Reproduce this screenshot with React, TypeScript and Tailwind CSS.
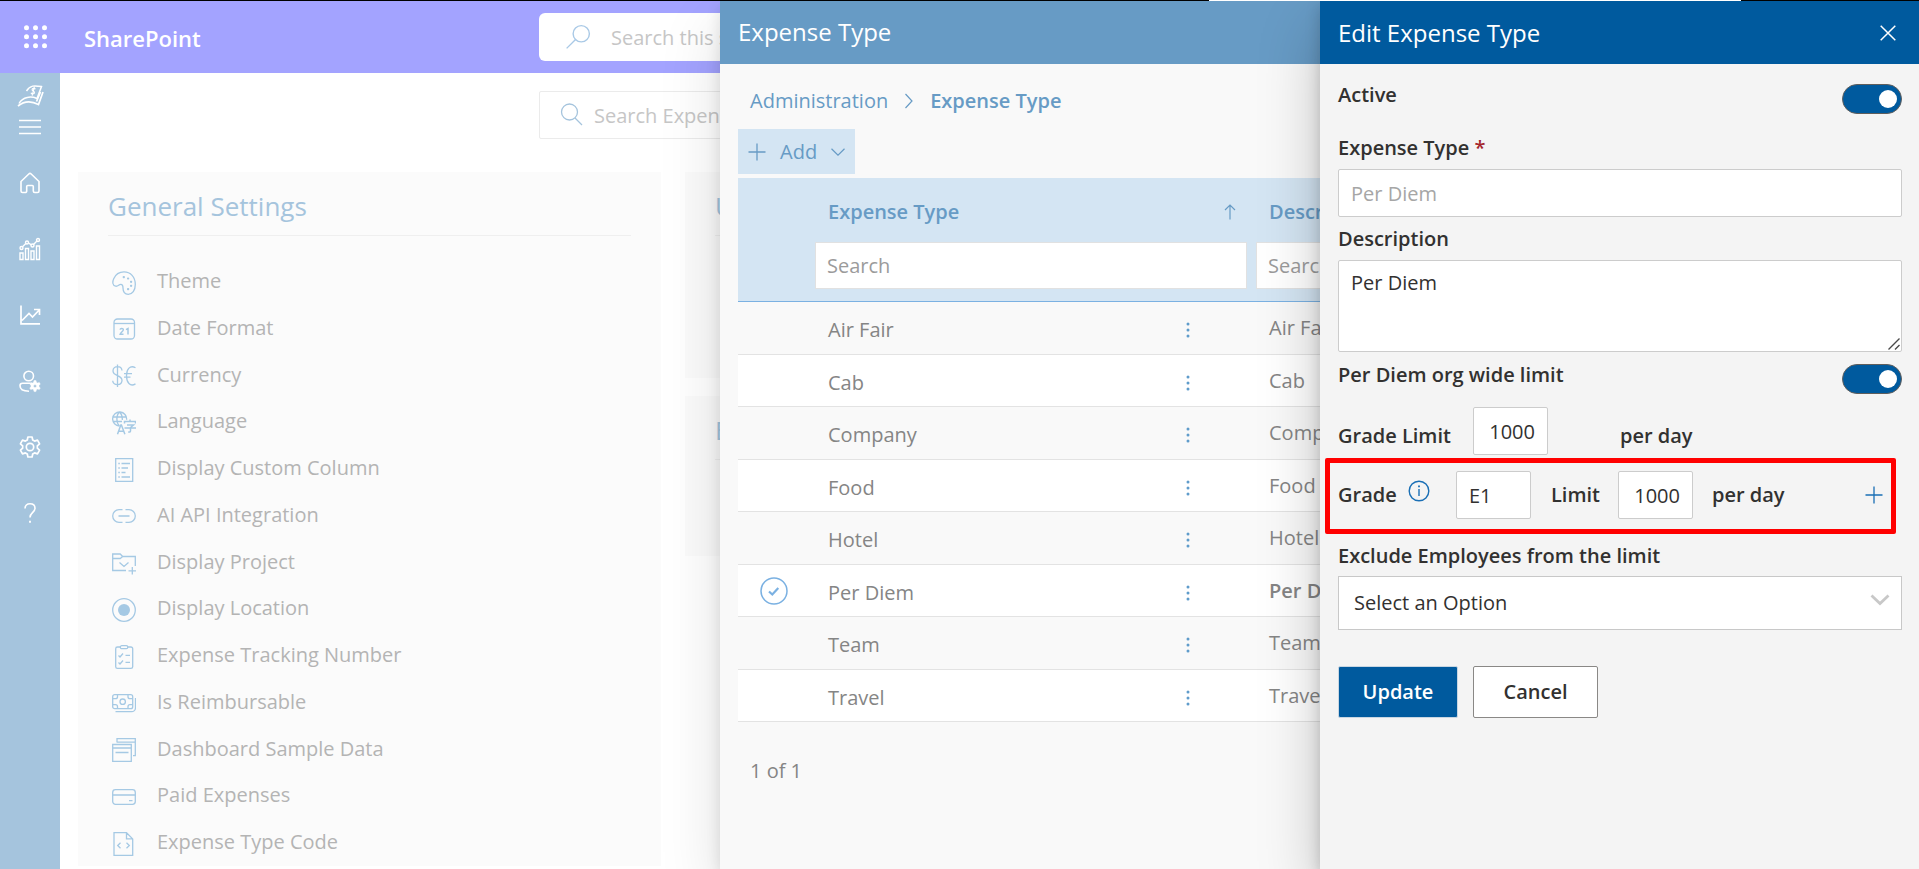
import React from "react";

type IconProps = { children: React.ReactNode; className?: string; width?: number };

function Icon({ children, className = "size-6", width = 1.3 }: IconProps) {
  return (
    <svg
      viewBox="0 0 24 24"
      className={className}
      fill="none"
      stroke="currentColor"
      strokeWidth={width}
      aria-hidden="true"
    >
      {children}
    </svg>
  );
}

const gearPath =
  "M9.9 2h4.2l.6 3 1.9 1.1 2.9-1 2.1 3.7-2.3 2a6 6 0 0 1 0 2.4l2.3 2-2.1 3.7-2.9-1-1.9 1.1-.6 3H9.9l-.6-3-1.9-1.1-2.9 1-2.1-3.7 2.3-2a6 6 0 0 1 0-2.4l-2.3-2 2.1-3.7 2.9 1 1.9-1.1z";

const settings: { label: string; icon: React.ReactNode }[] = [
  {
    label: "Theme",
    icon: (
      <Icon>
        <path d="M12 .8C18.500.8 23.300 6 23.300 13.500c0 5.800-3 9.800-7 9.800-3.600 0-5.300-2.500-5.300-6.300 0-2.200-.6-3.700-2.300-3.700-1.800 0-2.700 2.300-5 1.900C.4 14.700.3 11 1.700 7.700 3.500 3.400 7.500.8 12 .8z" />
        <g fill="currentColor" stroke="none">
          <rect x="10.700" y="5" width="2.200" height="2.200" rx=".8" />
          <rect x="15" y="6.400" width="2.200" height="2.200" rx=".8" />
          <rect x="18" y="9.700" width="2.200" height="2.200" rx=".8" />
          <rect x="18" y="13.700" width="2.200" height="2.200" rx=".8" />
          <rect x="15" y="17" width="2.200" height="2.200" rx=".8" />
        </g>
      </Icon>
    ),
  },
  {
    label: "Date Format",
    icon: (
      <Icon>
        <rect x="2" y="2" width="20.500" height="20" rx="3.500" />
        <path d="M2 6.500h20.500" />
        <path d="M8 12.600c.4-1.700 3.400-1.600 3.300.2 0 1.500-2.800 2.800-3.200 4.500h3.400M14 12.700l2-1.200v6" strokeWidth="1.500" />
      </Icon>
    ),
  },
  {
    label: "Currency",
    icon: (
      <Icon>
        <path d="M10 6.500C9.700 4 7.900 2.700 5.500 2.700S1 4.300 1 7c0 5.500 9 3.700 9 9.300 0 3-2.200 4.300-4.600 4.300C2.700 20.600 1 19.300.7 16.700M5.500.5v22.500" />
        <path d="M23.500 3.700c-5.500-3-9 1.500-9 8s3.500 11.500 9 8.200M12 9.700h8M12 13.200h6.500" />
      </Icon>
    ),
  },
  {
    label: "Language",
    icon: (
      <Icon>
        <path d="M14.600 8.700A7 7 0 1 0 7.500 15M1 6h13M1.300 10.500H10M7.500 1C4 4 4 12 7.500 15M7.500 1c2.200 2 3 5 2.800 8" />
        <path d="M5.500 23.300 8.800 14h.6l3.500 9.300M6.600 20.300h5.300" strokeWidth="1.500" />
        <path d="M12.500 12.500v-2h11v2M15 14h6.500l-3 2.500V20c0 1-1 1.200-2.300 1M12.500 17h11.500M18 8.500v2" strokeWidth="1.500" />
      </Icon>
    ),
  },
  {
    label: "Display Custom Column",
    icon: (
      <Icon>
        <path d="M3.700.7h17v22.600h-17zM9.500 5.500h8.500M9.500 10h6.500M9.500 14.500h4M9.500 19h8.500M6.300 5.500h1.500M6.300 10h1.500M6.300 14.500h1.500M6.300 19h1.500" />
      </Icon>
    ),
  },
  {
    label: "AI API Integration",
    icon: (
      <Icon>
        <path d="M10.500 5.700H7a6.300 6.300 0 0 0 0 12.600h3.500M13.500 5.700H17a6.300 6.300 0 0 1 0 12.600h-3.500M6.500 12h11" />
      </Icon>
    ),
  },
  {
    label: "Display Project",
    icon: (
      <Icon>
        <path d="M14 19.500H.7V3h7.500l2.500 2.500h12.600V15M.7 7.500h7.500l2.500-2M7.500 11.500l4.500 4 4.500-4M20.300 16v7.500M16.500 19.800H24" />
      </Icon>
    ),
  },
  {
    label: "Display Location",
    icon: (
      <Icon>
        <circle cx="12" cy="12" r="11.300" />
        <circle cx="12" cy="12" r="6" fill="currentColor" stroke="none" />
      </Icon>
    ),
  },
  {
    label: "Expense Tracking Number",
    icon: (
      <Icon>
        <path d="M9 2H5.500C4.400 2 3.700 2.700 3.700 3.700v18c0 1 .7 1.600 1.700 1.600h13.500c1 0 1.800-.6 1.800-1.600v-18c0-1-.7-1.700-1.800-1.700H15" />
        <rect x="8.300" y=".7" width="7.500" height="3" rx="1.500" />
        <path d="m6.500 10.500 1.500 1.500 3-3.500M13.500 10.300h4.500M6.500 17.500 8 19l3-3.500M13.500 17.300h4.500" />
      </Icon>
    ),
  },
  {
    label: "Is Reimbursable",
    icon: (
      <Icon>
        <rect x=".7" y="3.700" width="20" height="14" rx="2" />
        <circle cx="10.700" cy="10.700" r="2.700" />
        <path d="M5.500 3.700v2a2 2 0 0 1-2 2H.7M16 3.700v2a2 2 0 0 0 2 2h2.700M5.500 17.700v-2a2 2 0 0 0-2-2H.7M16 17.700v-2a2 2 0 0 1 2-2h2.700M3.500 20.700h16a4 4 0 0 0 4-4V7" />
      </Icon>
    ),
  },
  {
    label: "Dashboard Sample Data",
    icon: (
      <Icon>
        <path d="M.7 6.500h18.600v16.800H.7zM.7 10h18.600M3.500 14.500h13M5 4.500V.7h18.300v17H21M5 4.200h18.300" />
      </Icon>
    ),
  },
  {
    label: "Paid Expenses",
    icon: (
      <Icon>
        <rect x=".7" y="4.700" width="22.600" height="14.600" rx="2.800" />
        <path d="M.7 10h22.600M17 15.700h3.500" />
      </Icon>
    ),
  },
  {
    label: "Expense Type Code",
    icon: (
      <Icon>
        <path d="M2 .7h12.500l6.200 6.200v16.400H2zM14.500.7v6.200h6.200M8.500 10.800 5.700 13.500l2.800 2.700M14.500 10.800l2.800 2.700-2.800 2.700" />
      </Icon>
    ),
  },
];

const navItems: { label: string; icon: React.ReactNode }[] = [
  {
    label: "Home",
    icon: (
      <Icon width={1.6}>
        <path d="M3 10.500 10.800 3a1.700 1.700 0 0 1 2.400 0L21 10.500V20a1.500 1.500 0 0 1-1.500 1.500h-2.700a1.500 1.500 0 0 1-1.500-1.500v-4.500a1 1 0 0 0-1-1H9.700a1 1 0 0 0-1 1V20a1.500 1.500 0 0 1-1.500 1.500H4.500A1.500 1.500 0 0 1 3 20z" />
      </Icon>
    ),
  },
  {
    label: "Dashboard",
    icon: (
      <Icon width={1.4}>
        <path d="M2 16h3v6.500H2zM7.500 11.500h3v11h-3zM13 14h3v8.500h-3zM18.500 9h3v13.500h-3zM4.500 9.800 7.800 6.500M10.500 6l2.800 1.800M15.500 7.500l3.700-3.700" />
        <circle cx="3.500" cy="11" r="1.500" />
        <circle cx="9" cy="5.500" r="1.500" />
        <circle cx="14.500" cy="8.500" r="1.500" />
        <circle cx="20" cy="3" r="1.500" />
      </Icon>
    ),
  },
  {
    label: "Reports",
    icon: (
      <Icon width={1.7}>
        <path d="M3 2.500v18.300h19M4 17.500l7-7 3.500 3.500 6.700-7M16 6.500h5.500V12" />
      </Icon>
    ),
  },
  {
    label: "Administrators",
    icon: (
      <Icon width={1.6}>
        <circle cx="10.700" cy="7" r="4.800" />
        <path d="M12 14.300H4.500A2.500 2.500 0 0 0 2 16.800c0 3.700 4 5.400 9 5.400" />
        <path
          d="M16 11.500h2l.4 1.800 1.200.7 1.700-.6 1 1.700-1.300 1.300v1.300l1.300 1.200-1 1.700-1.700-.5-1.200.7-.4 1.800h-2l-.4-1.800-1.200-.7-1.700.5-1-1.700 1.300-1.200v-1.300l-1.300-1.300 1-1.700 1.700.6 1.200-.7zM17 15.600a1.500 1.500 0 1 0 0 3 1.500 1.500 0 0 0 0-3z"
          fill="currentColor"
          fillRule="evenodd"
          strokeWidth=".4"
        />
      </Icon>
    ),
  },
  {
    label: "Settings",
    icon: (
      <Icon width={1.7}>
        <path d={gearPath} strokeLinejoin="round" />
        <circle cx="12" cy="12" r="3.700" />
      </Icon>
    ),
  },
  {
    label: "Help",
    icon: (
      <Icon width={1.6}>
        <path d="M7 7.500C7 4.500 9 2.800 12 2.800s5 1.700 5 4.500c0 4-5 4.200-5 9.200" />
        <path d="M12 19.700v2" strokeWidth="1.900" />
      </Icon>
    ),
  },
];

const rows = [
  { name: "Air Fair" },
  { name: "Cab" },
  { name: "Company" },
  { name: "Food" },
  { name: "Hotel" },
  { name: "Per Diem", selected: true },
  { name: "Team" },
  { name: "Travel" },
];

function Toggle({ id }: { id: string }) {
  return (
    <span className="relative inline-flex">
      <input
        id={id}
        type="checkbox"
        role="switch"
        defaultChecked
        className="peer h-[30px] w-[60px] appearance-none rounded-full border border-[#605e5c] bg-white checked:bg-[#005a9e]"
      />
      <span className="pointer-events-none absolute top-1.5 left-1.5 size-[18px] rounded-full bg-[#605e5c] peer-checked:left-[37px] peer-checked:bg-white" />
    </span>
  );
}

function Plus({ className }: { className: string }) {
  return (
    <svg viewBox="0 0 18 18" className={className} stroke="currentColor" strokeWidth="1.300" aria-hidden="true">
      <path d="M9 .5v17M.5 9h17" />
    </svg>
  );
}

const fieldBox = "rounded-xs border border-[#cccccc] bg-white text-[#323130]";

function SidePage() {
  return (
    <div className="flex h-full flex-col">
      <header className="flex h-[72px] shrink-0 items-center bg-[#a3a3ff]">
        <button aria-label="App launcher" className="ml-6 text-white">
          <svg viewBox="0 0 24 24" className="size-6" fill="currentColor" aria-hidden="true">
            <circle cx="2.500" cy="2.800" r="2.500" />
            <circle cx="11.500" cy="2.800" r="2.500" />
            <circle cx="20.500" cy="2.800" r="2.500" />
            <circle cx="2.500" cy="11.800" r="2.500" />
            <circle cx="11.500" cy="11.800" r="2.500" />
            <circle cx="20.500" cy="11.800" r="2.500" />
            <circle cx="2.500" cy="20.800" r="2.500" />
            <circle cx="11.500" cy="20.800" r="2.500" />
            <circle cx="20.500" cy="20.800" r="2.500" />
          </svg>
        </button>
        <a href="#sharepoint" className="ml-9 w-[455px] pt-0.5 text-[22px] font-semibold text-white">
          SharePoint
        </a>
        <label className="flex h-12 w-[600px] items-center gap-5 rounded-md bg-white pl-[26px] text-[#a9c9e6]">
          <Icon className="size-[26px]">
            <path d="M1.500 22.500 10 14" />
            <circle cx="15" cy="9" r="7.500" />
          </Icon>
          <input
            aria-label="Search this site"
            placeholder="Search this site"
            className="min-w-0 flex-1 pt-0.5 text-xl outline-none placeholder:text-[#c6c6c6]"
          />
        </label>
      </header>
      <div className="flex min-h-0 flex-1">
        <nav className="flex w-[60px] shrink-0 flex-col items-center bg-[#a5c4dd] pt-2.5 text-white">
          <svg viewBox="0 0 28 24" className="h-6 w-7" fill="none" stroke="currentColor" aria-hidden="true">
            <path d="M10.500 8C14 2 18.500 2.500 25.500 3.500L21 15.500c-6-2.500-14-2-18 5" strokeWidth="1.500" />
            <path d="M27 9l-4.500 12.500C14 17 8 18 2 23M24.500 9 20.500 18.500" strokeWidth="1.700" />
            <path d="M19.400 6.200c-.7-1.300-3.200-1.200-3.300.3-.1 1.700 2.800 1.600 2.400 3.400-.4 1.400-3 1.400-3.500-.1M18.400 3.600l-2.200 9" strokeWidth="1.200" />
          </svg>
          <button aria-label="Toggle menu" className="mt-3">
            <svg viewBox="0 0 22 16" className="h-4 w-[22px]" stroke="currentColor" strokeWidth="1.500" aria-hidden="true">
              <path d="M0 1.500h22M0 8h22M0 14.500h22" />
            </svg>
          </button>
          <ul className="mt-9 flex flex-col gap-[42px]">
            {navItems.map((item) => (
              <li key={item.label} className="flex">
                <a href="#nav" aria-label={item.label}>
                  {item.icon}
                </a>
              </li>
            ))}
          </ul>
        </nav>
        <main className="flex min-w-0 flex-1 flex-col pl-[18px]">
          <label className="mt-[18px] ml-[461px] flex h-12 w-[600px] shrink-0 items-center gap-2.5 rounded-xs border border-[#ebebeb] pl-5 text-[#a5c4dd]">
            <Icon className="size-6">
              <circle cx="9.500" cy="9" r="8" />
              <path d="m15 15 7 7" />
            </Icon>
            <input
              aria-label="Search Expense"
              placeholder="Search Expense"
              className="min-w-0 flex-1 pt-0.5 text-xl outline-none placeholder:text-[#c6c6c6]"
            />
          </label>
          <div className="mt-[33px] flex min-h-0 flex-1 items-start gap-6">
            <section className="w-[583px] shrink-0 bg-[#fbfbfb] px-[30px] pt-3.5">
              <h2 className="h-[50px] border-b border-[#efefef] text-[26px] leading-10 text-[#a5c4dd]">
                General Settings
              </h2>
              <ul className="mt-[22px] flex h-[608px] flex-col">
                {settings.map((item) => (
                  <li key={item.label} className="flex-1">
                    <a href="#setting" className="flex items-center gap-[21px] pl-1 text-xl leading-[45px] text-[#b4b4b4]">
                      <span className="pt-1 text-[#a5c9e4]">{item.icon}</span>
                      {item.label}
                    </a>
                  </li>
                ))}
              </ul>
            </section>
            <div className="flex min-w-0 flex-1 flex-col gap-[18px]">
              <section className="h-[206px] bg-[#fbfbfb] px-[30px] pt-3.5">
                <h2 className="h-[50px] border-b border-[#efefef] text-[26px] leading-10 text-[#a5c4dd]">Users</h2>
              </section>
              <section className="h-[160px] bg-[#fbfbfb] px-[30px] pt-3.5">
                <h2 className="h-[50px] border-b border-[#efefef] text-[26px] leading-10 text-[#a5c4dd]">Email</h2>
              </section>
            </div>
          </div>
        </main>
      </div>
    </div>
  );
}

function ListPanel() {
  return (
    <section
      aria-label="Expense Type"
      className="absolute inset-y-0 right-0 flex w-[1199px] flex-col bg-[#f9f9f9] shadow-[0_26px_58px_rgba(0,0,0,0.13),0_5px_14px_rgba(0,0,0,0.11)]"
    >
      <h1 className="h-[63px] shrink-0 bg-[#679bc5] pl-[18px] text-2xl leading-[62px] text-white">Expense Type</h1>
      <div className="flex flex-col items-start pl-[18px]">
        <nav aria-label="Breadcrumb" className="flex h-[65px] items-center gap-4 pt-2 pl-3 text-xl text-[#679bc5]">
          <a href="#administration">Administration</a>
          <svg viewBox="0 0 10 16" className="h-4 w-2.5" fill="none" stroke="currentColor" strokeWidth="1.200" aria-hidden="true">
            <path d="m1.500 1 6.500 7-6.500 7" />
          </svg>
          <a href="#expense-type" className="font-semibold">
            Expense Type
          </a>
        </nav>
        <button className="flex h-[45px] items-center gap-3.5 bg-[#d4e5f3] px-2.5 text-xl text-[#679bc5]">
          <Plus className="size-[18px]" />
          Add
          <svg viewBox="0 0 14 8" className="h-2 w-3.5" fill="none" stroke="currentColor" strokeWidth="1.200" aria-hidden="true">
            <path d="m.5.8 6.500 6.400L13.500.8" />
          </svg>
        </button>
        <table className="mt-1 w-full table-fixed border-separate border-spacing-0 text-left text-xl leading-7 text-[#858585]">
          <colgroup>
            <col className="w-[72px]" />
            <col className="w-[441px]" />
            <col />
          </colgroup>
          <thead className="bg-[#d4e5f3] text-[#679bc5]">
            <tr className="h-[64px]">
              <th />
              <th className="pt-1 pr-[15px] pl-[18px] font-semibold">
                <span className="flex items-center justify-between">
                  Expense Type
                  <svg viewBox="0 0 12 16" className="h-4 w-3" fill="none" stroke="currentColor" strokeWidth="1.200" aria-hidden="true">
                    <path d="M6 15.500V1M1 6l5-5 5 5" />
                  </svg>
                </span>
              </th>
              <th className="pt-1 pl-[18px] font-semibold">Description</th>
            </tr>
            <tr className="h-[60px]">
              <td className="border-b border-[#7bb1e2]" />
              <td className="border-b border-[#7bb1e2] pb-3 pl-[5px]">
                <input
                  aria-label="Search expense type"
                  placeholder="Search"
                  className="h-[47px] w-[432px] border border-[#e1e1e1] bg-white pl-[11px] placeholder:text-[#9b9b9b]"
                />
              </td>
              <td className="border-b border-[#7bb1e2] pb-3 pl-[5px]">
                <input
                  aria-label="Search description"
                  placeholder="Search"
                  className="h-[47px] w-[432px] border border-[#e1e1e1] bg-white pl-[11px] placeholder:text-[#9b9b9b]"
                />
              </td>
            </tr>
          </thead>
          <tbody>
            {rows.map((row) => (
              <tr key={row.name} className="odd:h-[53px] even:h-[52px] even:bg-white">
                <td className="border-b border-[#e3e3e3]">
                  {row.selected && (
                    <svg viewBox="0 0 28 28" className="ml-[22px] size-7 text-[#7bb1e2]" fill="none" stroke="currentColor" role="img" aria-label="Selected">
                      <circle cx="14" cy="14" r="13" strokeWidth="1.500" />
                      <path d="m9 14.500 3.300 3 6-6.500" strokeWidth="2.200" />
                    </svg>
                  )}
                </td>
                <td className="border-b border-[#e3e3e3] pt-1 pl-[18px]">
                  <span className="flex items-center justify-between pr-[61px]">
                    {row.name}
                    <button aria-label={`More actions for ${row.name}`} className="text-[#5f9ccb]">
                      <svg viewBox="0 0 4 18" className="h-[18px] w-1" fill="currentColor" aria-hidden="true">
                        <circle cx="2" cy="3" r="1.500" />
                        <circle cx="2" cy="9" r="1.500" />
                        <circle cx="2" cy="15" r="1.500" />
                      </svg>
                    </button>
                  </span>
                </td>
                <td className={row.selected ? "border-b border-[#e3e3e3] pl-[18px] font-semibold" : "border-b border-[#e3e3e3] pl-[18px]"}>
                  {row.name}
                </td>
              </tr>
            ))}
          </tbody>
        </table>
        <p className="mt-[35px] pl-3 text-xl text-[#858585]">1 of 1</p>
      </div>
    </section>
  );
}

function EditPanel() {
  return (
    <section
      aria-label="Edit Expense Type"
      className="absolute inset-y-0 right-0 flex w-[599px] flex-col bg-[#f4f4f4] text-[#323130] shadow-[0_26px_58px_rgba(0,0,0,0.22),0_5px_14px_rgba(0,0,0,0.18)]"
    >
      <header className="flex h-[63px] shrink-0 items-center justify-between bg-[#005a9e] pr-[23px] pl-[18px] text-white">
        <h1 className="text-2xl">Edit Expense Type</h1>
        <button aria-label="Close">
          <svg viewBox="0 0 16 16" className="size-4" stroke="currentColor" strokeWidth="1.500" aria-hidden="true">
            <path d="m.7.7 14.600 14.600M15.300.7.7 15.300" />
          </svg>
        </button>
      </header>
      <form className="flex flex-col pt-5 pr-[17px] pl-[18px] text-xl" onSubmit={(event) => event.preventDefault()}>
        <div className="flex items-start justify-between">
          <label htmlFor="active" className="leading-[22px] font-semibold">
            Active
          </label>
          <Toggle id="active" />
        </div>
        <label htmlFor="expense-type" className="mt-5 leading-7 font-semibold">
          Expense Type <span className="text-[#a4262c]">*</span>
        </label>
        <input
          id="expense-type"
          placeholder="Per Diem"
          className={`${fieldBox} mt-[7px] h-12 px-3 placeholder:text-[#a6a6a6]`}
        />
        <label htmlFor="description" className="mt-2 leading-7 font-semibold">
          Description
        </label>
        <div className="relative mt-[7px] flex">
          <textarea
            id="description"
            defaultValue="Per Diem"
            className={`${fieldBox} h-[92px] w-full resize-none px-3 py-2 leading-7`}
          />
          <svg viewBox="0 0 12 12" className="pointer-events-none absolute right-0.5 bottom-0.5 size-3 text-[#4a4a4a]" stroke="currentColor" strokeWidth="1.400" aria-hidden="true">
            <path d="M.5 11.500l11-11M7 11.500l4.500-4.500" />
          </svg>
        </div>
        <div className="mt-3 flex items-start justify-between">
          <label htmlFor="org-limit" className="leading-[22px] font-semibold">
            Per Diem org wide limit
          </label>
          <Toggle id="org-limit" />
        </div>
        <div className="mt-[13px] flex items-end leading-[38px] font-semibold">
          <label htmlFor="grade-limit" className="w-[135px]">
            Grade Limit
          </label>
          <input
            id="grade-limit"
            defaultValue="1000"
            className={`${fieldBox} h-12 w-[75px] pr-3 text-right font-normal`}
          />
          <span className="ml-[72px]">per day</span>
        </div>
        <div className="mt-[3px] mr-1.5 -ml-[13px] flex items-center rounded-xs border-5 border-[#ff0000] pt-2 pr-2 pb-2.5 pl-2 font-semibold">
          <label htmlFor="grade" className="w-[70px]">
            Grade
          </label>
          <svg viewBox="0 0 22 22" className="mb-2 size-[22px] text-[#1a6fb5]" fill="none" stroke="currentColor" strokeWidth="1.400" role="img" aria-label="Grade information">
            <circle cx="11" cy="11" r="9.800" />
            <path d="M11 9v7" />
            <path d="M11 5.500v1.800" strokeWidth="1.800" />
          </svg>
          <input id="grade" defaultValue="E1" className={`${fieldBox} ml-[26px] h-12 w-[75px] pl-3 font-normal`} />
          <label htmlFor="limit" className="ml-5 w-[67px]">
            Limit
          </label>
          <input id="limit" defaultValue="1000" className={`${fieldBox} h-12 w-[75px] pr-3 text-right font-normal`} />
          <span className="ml-[19px]">per day</span>
          <button aria-label="Add grade" className="ml-auto text-[#1a6fb5]">
            <Plus className="size-[18px]" />
          </button>
        </div>
        <label htmlFor="exclude" className="mt-2 leading-7 font-semibold">
          Exclude Employees from the limit
        </label>
        <div className="relative mt-1.5 flex">
          <select id="exclude" className="h-[54px] w-full appearance-none border border-[#c8c8c8] bg-white px-[15px]">
            <option>Select an Option</option>
          </select>
          <svg viewBox="0 0 20 12" className="pointer-events-none absolute top-[18px] right-3 h-3 w-5 text-[#c8c8c8]" fill="none" stroke="currentColor" strokeWidth="2.800" aria-hidden="true">
            <path d="m1.500 1.500 8.500 8 8.500-8" />
          </svg>
        </div>
        <div className="mt-9 flex items-center gap-[15px] font-semibold">
          <button type="submit" className="h-[52px] w-[120px] rounded-xs border border-[#c8d6e2] bg-[#005a9e] text-white">
            Update
          </button>
          <button type="button" className="h-[52px] w-[125px] rounded-xs border border-[#8a8886] bg-white">
            Cancel
          </button>
        </div>
      </form>
    </section>
  );
}

export default function App() {
  return (
    <div className="flex h-screen flex-col overflow-hidden bg-white font-['Open_Sans','Noto_Sans',sans-serif]">
      <div className="flex h-px shrink-0 bg-black">
        <div className="ml-[63%] w-[532px] bg-white" />
      </div>
      <div className="relative min-h-0 flex-1 overflow-hidden">
        <SidePage />
        <ListPanel />
        <EditPanel />
      </div>
    </div>
  );
}
